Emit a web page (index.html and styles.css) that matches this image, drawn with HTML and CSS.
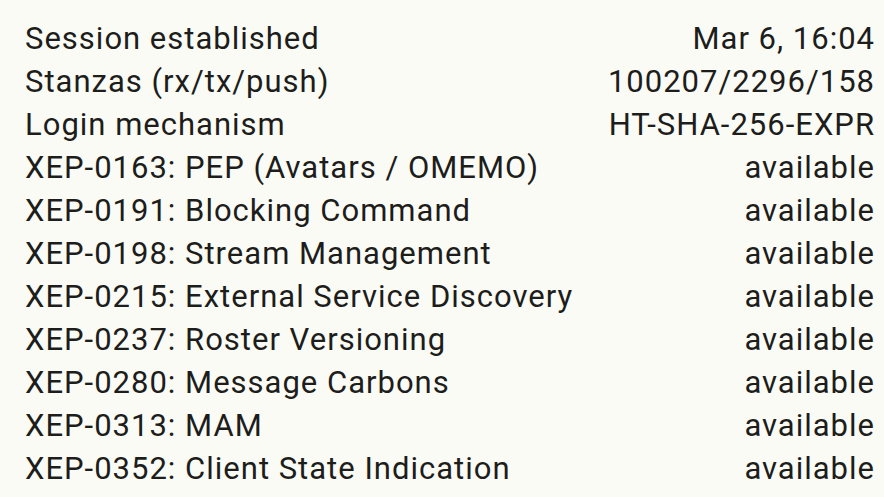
FILE: index.html
```html
<!DOCTYPE html>
<html>
<head>
<meta charset="utf-8">
<link rel="stylesheet" href="styles.css">
</head>
<body>
<div class="list">
  <div class="row"><span class="label">Session established</span><span class="value">Mar 6, 16:04</span></div>
  <div class="row"><span class="label">Stanzas (rx/tx/push)</span><span class="value">100207/2296/158</span></div>
  <div class="row"><span class="label">Login mechanism</span><span class="value">HT-SHA-256-EXPR</span></div>
  <div class="row"><span class="label">XEP-0163: PEP (Avatars / OMEMO)</span><span class="value">available</span></div>
  <div class="row"><span class="label">XEP-0191: Blocking Command</span><span class="value">available</span></div>
  <div class="row"><span class="label">XEP-0198: Stream Management</span><span class="value">available</span></div>
  <div class="row"><span class="label">XEP-0215: External Service Discovery</span><span class="value">available</span></div>
  <div class="row"><span class="label">XEP-0237: Roster Versioning</span><span class="value">available</span></div>
  <div class="row"><span class="label">XEP-0280: Message Carbons</span><span class="value">available</span></div>
  <div class="row"><span class="label">XEP-0313: MAM</span><span class="value">available</span></div>
  <div class="row"><span class="label">XEP-0352: Client State Indication</span><span class="value">available</span></div>
</div>
</body>
</html>
```
FILE: styles.css
```css
html, body {
  margin: 0;
  padding: 0;
  background: #fbfbf6;
}
body {
  font-family: Roboto, "Noto Sans", sans-serif;
  color: #1d1d1b;
}
.list {
  display: flex;
  flex-direction: column;
  padding: 17px 10px 0 25px;
}
.row {
  display: flex;
  justify-content: space-between;
  font-size: 31px;
  letter-spacing: 1px;
  line-height: 43px;
  height: 43px;
}
.value {
  text-align: right;
  margin-right: -1px;
}
```
